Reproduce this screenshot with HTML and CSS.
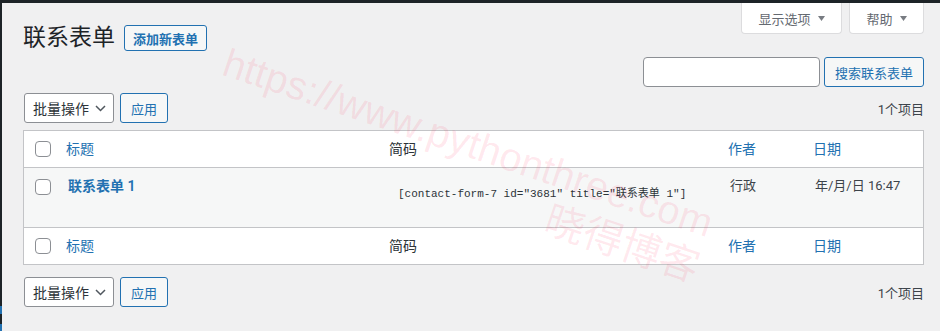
FILE: index.html
```html
<!DOCTYPE html>
<html lang="zh-CN">
<head>
<meta charset="utf-8">
<title>联系表单</title>
<link rel="stylesheet" href="styles.css">
</head>
<body>
<div class="adminbar"></div>
<div class="layout">
  <aside class="sidebar"><span class="mark mark1"></span><span class="mark mark2"></span></aside>
  <main class="content">
    <div class="header">
      <div class="title-row">
        <h1 class="page-title">联系表单</h1>
        <a class="btn btn-add">添加新表单</a>
      </div>
      <div class="meta-tabs">
        <div class="tab tab-screen">显示选项 <svg class="caret" width="7" height="5" viewBox="0 0 7 5"><polygon points="0,0 7,0 3.5,5"/></svg></div>
        <div class="tab tab-help">帮助 <svg class="caret" width="7" height="5" viewBox="0 0 7 5"><polygon points="0,0 7,0 3.5,5"/></svg></div>
      </div>
    </div>
    <div class="search-row">
      <div class="search-input"></div>
      <div class="btn btn-search">搜索联系表单</div>
    </div>
    <div class="tablenav">
      <div class="actions">
        <div class="select">批量操作<svg class="chev" width="11" height="7" viewBox="0 0 11 7"><path d="M1 1 L5.5 5.5 L10 1"/></svg></div>
        <div class="btn btn-apply">应用</div>
      </div>
      <div class="count">1个项目</div>
    </div>
    <div class="table">
      <div class="row head">
        <div class="cb"><span class="checkbox"></span></div>
        <div class="cell link">标题</div>
        <div class="cell">简码</div>
        <div class="cell link">作者</div>
        <div class="cell link">日期</div>
      </div>
      <div class="row item">
        <div class="cb"><span class="checkbox"></span></div>
        <div class="cell row-title">联系表单 1</div>
        <div class="shortcode">[contact-form-7 id="3681" title="联系表单 1"]</div>
        <div class="cell">行政</div>
        <div class="cell">年/月/日 16:47</div>
      </div>
      <div class="row head">
        <div class="cb"><span class="checkbox"></span></div>
        <div class="cell link">标题</div>
        <div class="cell">简码</div>
        <div class="cell link">作者</div>
        <div class="cell link">日期</div>
      </div>
    </div>
    <div class="tablenav bottom">
      <div class="actions">
        <div class="select">批量操作<svg class="chev" width="11" height="7" viewBox="0 0 11 7"><path d="M1 1 L5.5 5.5 L10 1"/></svg></div>
        <div class="btn btn-apply">应用</div>
      </div>
      <div class="count">1个项目</div>
    </div>
  </main>
</div>
<div class="watermark">
  <span class="wm-url">https://www.pythonthree.com</span>
  <span class="wm-cn">晓得博客</span>
</div>
</body>
</html>
```

FILE: styles.css
```css
html, body {
  margin: 0;
  padding: 0;
}
body {
  width: 940px;
  height: 331px;
  overflow: hidden;
  position: relative;
  background: #f0f0f1;
  font-family: Roboto, "Noto Sans CJK SC", sans-serif;
  font-size: 13px;
  color: #3c434a;
}
.adminbar {
  height: 3px;
  background: #1d2327;
}
.layout {
  display: flex;
  height: 328px;
}
.sidebar {
  width: 2px;
  flex: none;
  background: #1d2327;
  display: flex;
  flex-direction: column;
}
.mark {
  display: block;
  background: #2271b1;
}
.mark1 {
  height: 8px;
  margin-top: 303px;
}
.mark2 {
  height: 7px;
  margin-top: 10px;
}
.content {
  flex: 1;
  padding: 0 16px 0 21px;
}
.header {
  display: flex;
  justify-content: space-between;
  align-items: flex-start;
}
.title-row {
  display: flex;
  align-items: center;
  gap: 9px;
  height: 26px;
  margin-top: 22px;
}
.page-title {
  margin: 0;
  font-size: 23px;
  font-weight: 400;
  line-height: 26px;
  color: #1d2327;
}
.btn {
  box-sizing: border-box;
  height: 30px;
  border: 1px solid #2271b1;
  border-radius: 3px;
  background: #f6f7f7;
  color: #2271b1;
  font-size: 13px;
  display: flex;
  align-items: center;
  justify-content: center;
}
.btn-add {
  height: 26px;
  padding: 0 8px;
  font-weight: 600;
}
.meta-tabs {
  display: flex;
  gap: 7px;
}
.tab {
  box-sizing: border-box;
  height: 31px;
  border: 1px solid #dcdcde;
  border-top: 0;
  border-radius: 0 0 4px 4px;
  background: #fff;
  color: #646970;
  display: flex;
  align-items: center;
  justify-content: center;
  gap: 7px;
}
.tab-screen {
  width: 101px;
}
.tab-help {
  width: 75px;
}
.caret {
  fill: #787c82;
}
.search-row {
  display: flex;
  justify-content: flex-end;
  gap: 4px;
  margin-top: 6px;
}
.search-input {
  box-sizing: border-box;
  width: 177px;
  height: 30px;
  border: 1px solid #8c8f94;
  border-radius: 4px;
  background: #fff;
}
.btn-search {
  width: 100px;
}
.tablenav {
  display: flex;
  justify-content: space-between;
  align-items: center;
  height: 30px;
  margin-top: 6px;
  padding-left: 1px;
}
.tablenav.bottom {
  margin-top: 12px;
}
.actions {
  display: flex;
  gap: 6px;
}
.select {
  box-sizing: border-box;
  width: 90px;
  height: 30px;
  border: 1px solid #8c8f94;
  border-radius: 3px;
  background: #fff;
  display: flex;
  align-items: center;
  justify-content: space-between;
  padding: 0 7px 0 8px;
  font-size: 14px;
  color: #2c3338;
}
.chev {
  fill: none;
  stroke: #50575e;
  stroke-width: 1.5;
}
.btn-apply {
  width: 48px;
}
.count {
  color: #3c434a;
}
.table {
  margin-top: 7px;
  border: 1px solid #c3c4c7;
  background: #fff;
}
.row {
  display: grid;
  grid-template-columns: 34px 323px 339px 85px 1fr;
  border-bottom: 1px solid #c3c4c7;
}
.row:last-child {
  border-bottom: 0;
}
.row.head {
  height: 36px;
  align-items: center;
  font-size: 14px;
  line-height: 20px;
  color: #2c3338;
}
.row.item {
  height: 59px;
  align-items: start;
  background: #f6f7f7;
}
.cb {
  padding-left: 11px;
  display: flex;
}
.checkbox {
  display: block;
  box-sizing: border-box;
  width: 16px;
  height: 16px;
  border: 1px solid #8c8f94;
  border-radius: 4px;
  background: #fff;
}
.cell {
  padding-left: 8px;
}
.link {
  color: #2271b1;
}
.item .cb {
  padding-top: 11px;
}
.item .cell {
  padding: 8px 0 0 10px;
  line-height: 20px;
}
.item .row-title {
  font-size: 14px;
  font-weight: 600;
  color: #2271b1;
}
.shortcode {
  padding: 18px 0 0 17px;
  font-family: "Liberation Mono", "Noto Sans CJK SC", monospace;
  font-size: 11px;
  line-height: 16px;
  color: #2c3338;
  white-space: nowrap;
}
.watermark {
  position: absolute;
  left: 231px;
  top: 42px;
  transform-origin: 0 0;
  transform: rotate(18.5deg);
  color: rgba(255, 30, 80, 0.1);
  font-family: "Liberation Sans", sans-serif;
  font-size: 40px;
  line-height: 40px;
  white-space: nowrap;
  pointer-events: none;
}
.wm-url {
  display: block;
}
.wm-cn {
  display: block;
  margin-left: 355px;
  margin-top: 4px;
  font-family: "Noto Sans CJK SC", sans-serif;
}
```
